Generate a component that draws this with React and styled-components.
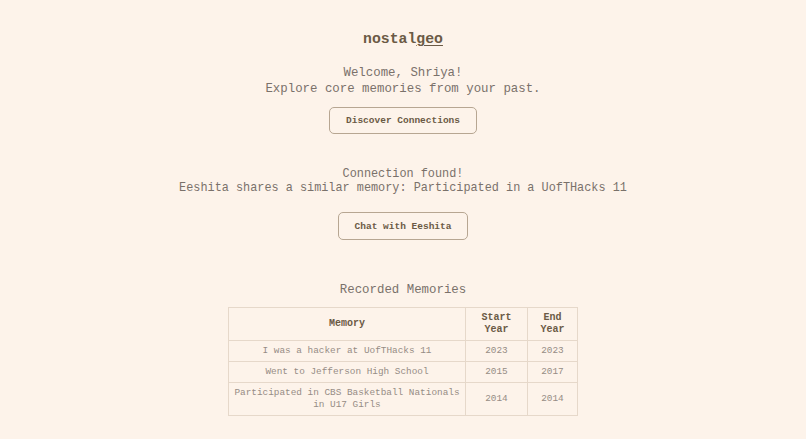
import React from 'react'
import styled, { createGlobalStyle } from 'styled-components'

const memories = [
  { text: 'I was a hacker at UofTHacks 11', start: 2023, end: 2023 },
  { text: 'Went to Jefferson High School', start: 2015, end: 2017 },
  {
    text: 'Participated in CBS Basketball Nationals in U17 Girls',
    start: 2014,
    end: 2014
  }
]

const GlobalStyle = createGlobalStyle`
  html, body {
    margin: 0;
    padding: 0;
    background: #fdf3ea;
  }
  body {
    font-family: "Liberation Mono", "Courier New", monospace;
  }
`

export default function App() {
  return (
    <>
      <GlobalStyle />
      <Page>
        <Title>
          nostal<Underlined>geo</Underlined>
        </Title>
        <Intro>
          Welcome, Shriya!
          <br />
          Explore core memories from your past.
        </Intro>
        <Button wide>Discover Connections</Button>
        <Connection>
          Connection found!
          <br />
          Eeshita shares a similar memory: Participated in a UofTHacks 11
        </Connection>
        <Button>Chat with Eeshita</Button>
        <SectionTitle>Recorded Memories</SectionTitle>
        <Table>
          <colgroup>
            <col style={{ width: 237 }} />
            <col style={{ width: 62 }} />
            <col style={{ width: 50 }} />
          </colgroup>
          <thead>
            <tr>
              <Th>Memory</Th>
              <Th>Start Year</Th>
              <Th>End Year</Th>
            </tr>
          </thead>
          <tbody>
            {memories.map(m => (
              <tr key={m.text}>
                <Td>{m.text}</Td>
                <Td>{m.start}</Td>
                <Td>{m.end}</Td>
              </tr>
            ))}
          </tbody>
        </Table>
      </Page>
    </>
  )
}

const Page = styled.main`
  display: flex;
  flex-direction: column;
  align-items: center;
  padding-top: 30px;
  text-align: center;
`
const Title = styled.h1`
  margin: 0;
  font-size: 14.8px;
  line-height: 18px;
  font-weight: bold;
  color: #6b5a45;
`
const Underlined = styled.span`
  text-decoration: underline;
  text-underline-offset: 2px;
  text-decoration-thickness: 1px;
`
const Intro = styled.p`
  margin: 17px 0 0;
  font-size: 12.4px;
  line-height: 16px;
  color: #7a716a;
`
const Connection = styled.p`
  margin: 33px 0 0;
  font-size: 11.85px;
  line-height: 14px;
  color: #7a716a;
`
const Button = styled.button`
  margin-top: ${props => (props.wide ? '10px' : '17px')};
  font-family: inherit;
  font-size: 9.5px;
  font-weight: bold;
  line-height: 11px;
  color: #6b5a45;
  background: transparent;
  border: 1px solid #b7a692;
  border-radius: 5px;
  padding: ${props => (props.wide ? '7px 16px' : '7.5px 16px')};
  cursor: pointer;
`
const SectionTitle = styled.h2`
  margin: 42px 0 0;
  font-size: 12.4px;
  line-height: 16px;
  font-weight: normal;
  color: #7a716a;
`
const Table = styled.table`
  margin-top: 9px;
  width: 349px;
  table-layout: fixed;
  border-collapse: collapse;
  border: 1px solid #e6d8ca;
`
const Th = styled.th`
  border: 1px solid #e6d8ca;
  padding: 4px 5px;
  font-size: 10px;
  line-height: 12px;
  font-weight: bold;
  color: #6b5a45;
`
const Td = styled.td`
  border: 1px solid #e6d8ca;
  padding: 4px 4px;
  font-size: 9.4px;
  line-height: 12px;
  color: #968c85;
`
